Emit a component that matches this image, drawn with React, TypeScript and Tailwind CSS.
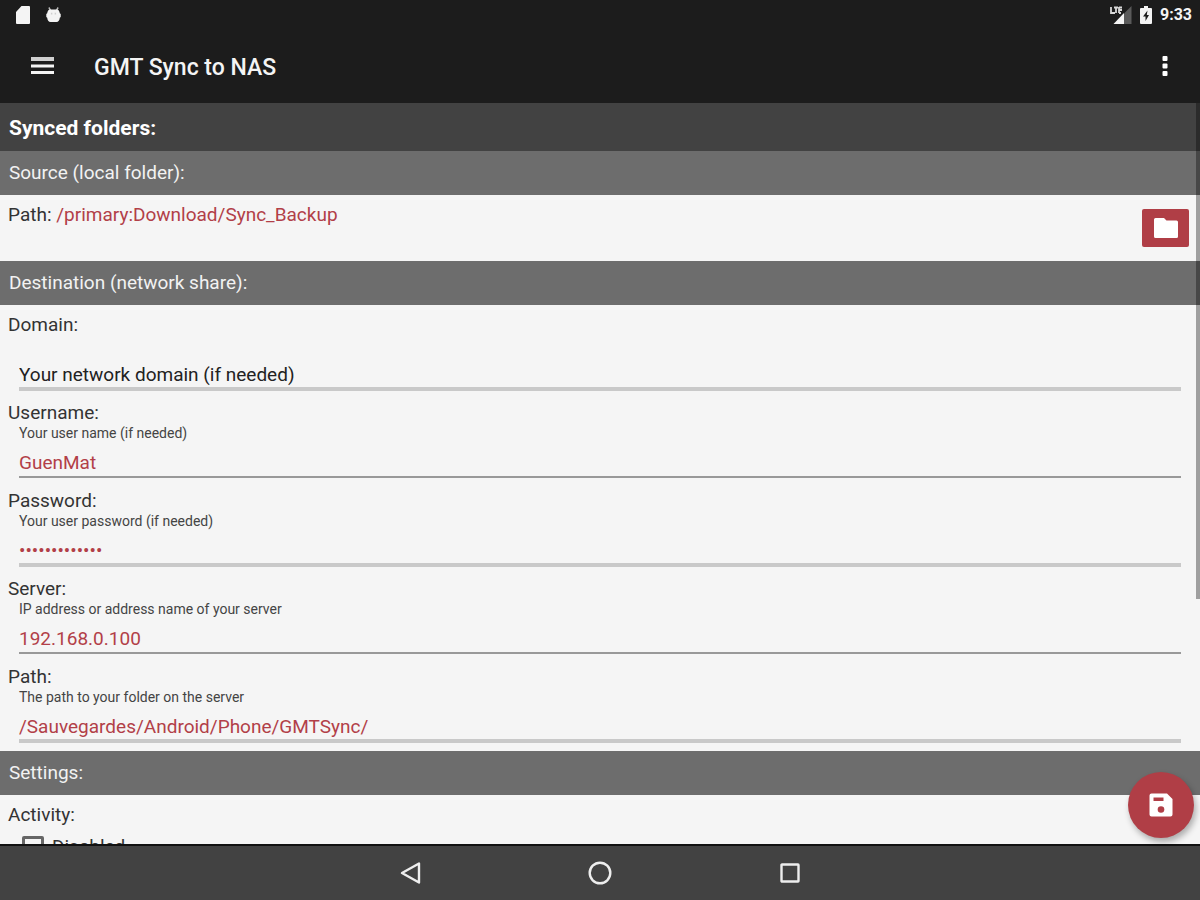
import { useState } from "react";
import clsx from "clsx";

type Field = {
  id: string;
  label: string;
  hint: string;
  value: string;
  type?: "text" | "password";
  line: "thin" | "thick";
};

const FIELDS: Field[] = [
  { id: "domain", label: "Domain:", hint: "Your network domain (if needed)", value: "", line: "thick" },
  { id: "username", label: "Username:", hint: "Your user name (if needed)", value: "GuenMat", line: "thin" },
  {
    id: "password",
    label: "Password:",
    hint: "Your user password (if needed)",
    value: "correcthorses",
    type: "password",
    line: "thick",
  },
  { id: "server", label: "Server:", hint: "IP address or address name of your server", value: "192.168.0.100", line: "thin" },
  {
    id: "path",
    label: "Path:",
    hint: "The path to your folder on the server",
    value: "/Sauvegardes/Android/Phone/GMTSync/",
    line: "thick",
  },
];

function StatusBar() {
  return (
    <div className="flex h-[30px] items-center justify-between pr-2 pl-4">
      <div className="flex items-center gap-4">
        <svg width="14" height="18" viewBox="0 0 14 18" fill="#f4f4f4" aria-hidden="true">
          <path d="M5.500 0H13a1 1 0 0 1 1 1v16a1 1 0 0 1-1 1H1a1 1 0 0 1-1-1V6z" />
        </svg>
        <svg width="15" height="18" viewBox="0 0 16 18" aria-hidden="true">
          <path d="M3 1l2 3M13 1l-2 3" stroke="#bbb" strokeWidth="1.500" />
          <path d="M3.500 3h9c1.500 1 2 2.500 2.200 4l1 1v3l-1 1c-.2 2.500-1.500 4.500-3.500 4.500H4.800c-2 0-3.300-2-3.500-4.500l-1-1V8l1-1c.2-1.500.7-3 2.200-4z" fill="#f4f4f4" />
          <path d="M6 6.500v2M10 6.500v2" stroke="#d0d0d0" strokeWidth="1.500" />
        </svg>
      </div>
      <div className="flex items-center">
        <svg width="22" height="18" viewBox="0 0 22 18" aria-hidden="true">
          <path d="M21.500 0v18H14V7.500z" fill="#5a5a5a" />
          <path d="M14 7v11H3.500z" fill="#f4f4f4" />
          <path d="M1 1v6h4M4 1.500h4M6 1.500V7M9 1.500h3M9 4h3M9 7h2M9 1v6" stroke="#d8d8d8" strokeWidth="1.800" fill="none" />
        </svg>
        <svg className="ml-2" width="12" height="18" viewBox="0 0 12 18" aria-hidden="true">
          <path d="M4 0h4v2h3a1 1 0 0 1 1 1v14a1 1 0 0 1-1 1H1a1 1 0 0 1-1-1V3a1 1 0 0 1 1-1h3z" fill="#f4f4f4" />
          <path d="M7.500 4.500L3 10.500h2.500v4.500L9 9H6.800z" fill="#1c1c1c" />
        </svg>
        <span className="ml-2 text-base font-bold">9:33</span>
      </div>
    </div>
  );
}

function AppBar() {
  return (
    <div className="flex h-[73px] items-center pr-[25px] pb-px pl-[30px]">
      <button type="button" aria-label="Menu" className="shrink-0">
        <svg width="24" height="20" viewBox="0 0 24 20" fill="#f4f4f4">
          <path d="M1 1h23v4H1z" fill="#cfcfcf" />
          <path d="M1 8.500h23v3H1zM1 15h23v3H1z" />
        </svg>
      </button>
      <h1 className="ml-10 pt-1 text-[23px] font-medium">GMT Sync to NAS</h1>
      <button type="button" aria-label="More options" className="ml-auto shrink-0">
        <svg width="20" height="20" viewBox="0 0 20 20" fill="#fff">
          <rect x="7.500" y="0" width="5" height="5" rx="1" />
          <rect x="7.500" y="7.500" width="5" height="5" rx="1" />
          <rect x="7.500" y="15" width="5" height="5" rx="1" />
        </svg>
      </button>
    </div>
  );
}

function SectionHeader({ title }: { title: string }) {
  return (
    <h3 className="flex h-11 items-center bg-[#6d6d6d] px-[9px] pt-px text-[19px] text-[#f2f2f2]">{title}</h3>
  );
}

function FieldRow({ field }: { field: Field }) {
  const [value, setValue] = useState(field.value);

  return (
    <div className="flex flex-col pt-2 pb-[2px]">
      <label htmlFor={field.id} className="px-2 text-[19px] leading-6">
        {field.label}
      </label>
      <span className="h-4 px-[19px] text-sm leading-4 text-[#444]">{value && field.hint}</span>
      <input
        id={field.id}
        type={field.type ?? "text"}
        value={value}
        placeholder={field.hint}
        onChange={(e) => setValue(e.target.value)}
        className={clsx(
          "mx-[19px] bg-transparent pt-2 text-[19px] text-[#b23f48] outline-none placeholder:text-[#222]",
          field.line === "thick"
            ? "h-[38px] border-b-4 border-[#c9c9c9]"
            : "mb-px h-[37px] border-b-2 border-[#999]"
        )}
      />
    </div>
  );
}

function NavigationBar() {
  return (
    <nav className="flex h-14 shrink-0 justify-center border-t-2 border-[#111] bg-[#424242] pb-px">
      <button type="button" aria-label="Back" className="flex w-[190px] items-center justify-center">
        <svg width="22" height="24" viewBox="0 0 22 24" fill="none" stroke="#eee" strokeWidth="2.400">
          <path d="M20 2.500v19L3 12z" strokeLinejoin="round" />
        </svg>
      </button>
      <button type="button" aria-label="Home" className="flex w-[190px] items-center justify-center">
        <svg width="24" height="24" viewBox="0 0 24 24" fill="none" stroke="#eee" strokeWidth="2.400">
          <circle cx="12" cy="12" r="10.300" />
        </svg>
      </button>
      <button type="button" aria-label="Recent apps" className="flex w-[190px] items-center justify-center">
        <svg width="20" height="20" viewBox="0 0 20 20" fill="none" stroke="#eee" strokeWidth="2.400">
          <rect x="1.500" y="1.500" width="17" height="17" rx="0.500" />
        </svg>
      </button>
    </nav>
  );
}

export default function App() {
  const [disabled, setDisabled] = useState(false);

  return (
    <div className="flex h-screen flex-col bg-[#f5f5f5] font-[Roboto,sans-serif] text-[#333]">
      <header className="shrink-0 bg-[#1c1c1c] text-[#f4f4f4]">
        <StatusBar />
        <AppBar />
      </header>

      <div className="relative min-h-0 flex-1">
        <main className="h-full overflow-y-auto [scrollbar-width:none]">
          <h2 className="flex h-12 items-center bg-[#424242] px-[9px] pt-1 text-[21px] font-bold text-white">
            Synced folders:
          </h2>

          <SectionHeader title="Source (local folder):" />
          <div className="flex h-[66px] items-center justify-between pr-[11px] pl-2">
            <p className="self-start pt-2 text-[19px] leading-6">
              Path: <span className="text-[#b23f48]">/primary:Download/Sync_Backup</span>
            </p>
            <button
              type="button"
              aria-label="Choose folder"
              className="flex h-[38px] w-[47px] items-center justify-center rounded-xs bg-[#b03e46]"
            >
              <svg width="24" height="20" viewBox="0 0 24 20" fill="#fff">
                <path d="M1.500 0H10l2.500 2.500h10A1.500 1.500 0 0 1 24 4v14.500a1.500 1.500 0 0 1-1.500 1.500h-21A1.500 1.500 0 0 1 0 18.500v-17A1.500 1.500 0 0 1 1.500 0z" />
              </svg>
            </button>
          </div>

          <SectionHeader title="Destination (network share):" />
          <div className="pb-[6px]">
            {FIELDS.map((field) => (
              <FieldRow key={field.id} field={field} />
            ))}
          </div>

          <SectionHeader title="Settings:" />
          <div className="px-2 pt-2">
            <p className="text-[19px] leading-6">Activity:</p>
            <label className="flex items-center gap-2 px-[14px] pt-2 text-[19px] leading-6">
              <input
                type="checkbox"
                checked={disabled}
                onChange={(e) => setDisabled(e.target.checked)}
                className="size-[22px] appearance-none rounded-xs border-[3px] border-[#666] checked:bg-[#b03e46]"
              />
              Disabled
            </label>
          </div>
        </main>

        {/* scroll thumb */}
        <div className="absolute top-0 right-0 h-[67%] w-1 bg-black/35" />

        <button
          type="button"
          aria-label="Save"
          className="absolute right-[6px] bottom-[6px] flex size-[66px] items-center justify-center rounded-full bg-[#b03e46] shadow-[2px_4px_6px_rgba(0,0,0,0.3)]"
        >
          <svg width="24" height="24" viewBox="0 0 24 24">
            <path d="M2.500 0.500H18L23.500 6v15.500a2 2 0 0 1-2 2h-19a2 2 0 0 1-2-2v-19a2 2 0 0 1 2-2z" fill="#fff" />
            <path d="M4.500 4.500h10v3.500h-10z" fill="#b03e46" />
            <circle cx="12" cy="16.500" r="3.300" fill="#b03e46" />
          </svg>
        </button>
      </div>

      <NavigationBar />
    </div>
  );
}
